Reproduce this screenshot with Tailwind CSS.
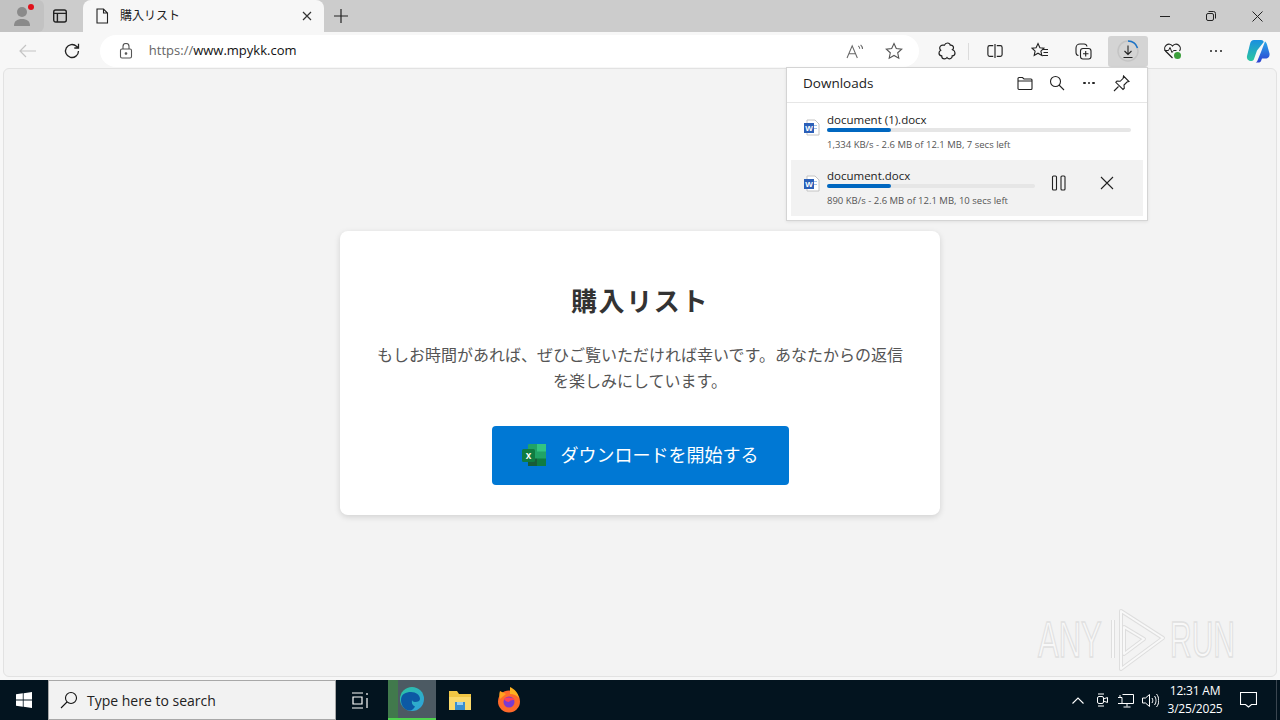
<!DOCTYPE html>
<html lang="ja">
<head>
  <meta charset="UTF-8" />
  <title>購入リスト</title>
  <script src="https://cdn.jsdelivr.net/npm/@tailwindcss/browser@4"></script>
</head>
<body class="relative w-[1280px] h-[720px] overflow-hidden bg-[#f7f7f7] font-['Open_Sans','Noto_Sans_CJK_JP',sans-serif] text-[#222]">

  <!-- title bar -->
  <div class="h-[32px] bg-[#cccccc] flex items-end">
    <div class="w-[44px] h-[32px] bg-[#c2c2c2] rounded-r-[6px] relative flex items-center justify-center">
      <svg width="18" height="20" viewBox="0 0 18 20" fill="#8a8a8a"><circle cx="9" cy="6" r="5"/><path d="M1 20c0-5 3-7 8-7s8 2 8 7z"/></svg>
      <span class="absolute left-[28px] top-[4px] w-[6px] h-[6px] rounded-full bg-[#e0101a]"></span>
    </div>
    <div class="w-[32px] h-[32px] mr-[7px] flex items-center justify-center">
      <svg width="16" height="16" viewBox="0 0 16 16" fill="none" stroke="#222" stroke-width="1.4"><rect x="1.700" y="2" width="12.600" height="12" rx="2"/><path d="M1.700 5.400h12.600M5.400 5.400V14"/></svg>
    </div>
    <div class="w-[241px] h-[32px] bg-[#f7f7f7] rounded-t-[8px] flex items-center pl-[12px] pr-[12px]">
      <svg width="14" height="16" viewBox="0 0 14 16" fill="none" stroke="#222" stroke-width="1.100"><path d="M2 1h6.500L12.500 5v10H2zM8.500 1v4h4"/></svg>
      <span class="ml-[11px] text-[12px] flex-1 text-[#222]">購入リスト</span>
      <svg width="10" height="10" viewBox="0 0 10 10" stroke="#333" stroke-width="1.200"><path d="M1 1l8 8M9 1L1 9"/></svg>
    </div>
    <div class="w-[34px] h-[32px] flex items-center justify-center">
      <svg width="14" height="14" viewBox="0 0 14 14" stroke="#222" stroke-width="1.200"><path d="M7 0v14M0 7h14"/></svg>
    </div>
    <div class="ml-auto flex h-[32px] items-center">
      <div class="w-[46px] flex justify-center"><svg width="10" height="10" viewBox="0 0 10 10" stroke="#222"><path d="M0 5.500h10"/></svg></div>
      <div class="w-[46px] flex justify-center"><svg width="10" height="10" viewBox="0 0 10 10" fill="none" stroke="#222"><rect x="0.500" y="2.500" width="7" height="7" rx="1.500"/><path d="M2.500 0.500h5a2 2 0 0 1 2 2v5"/></svg></div>
      <div class="w-[46px] flex justify-center"><svg width="11" height="11" viewBox="0 0 11 11" stroke="#222"><path d="M0.500 0.500l10 10M10.500 0.500l-10 10"/></svg></div>
    </div>
  </div>

  <!-- toolbar -->
  <div class="h-[36px] pt-[2px] bg-[#f7f7f7] flex items-center pl-[8px]">
    <div class="w-[40px] flex justify-center">
      <svg width="18" height="14" viewBox="0 0 18 14" fill="none" stroke="#c4c4c4" stroke-width="1.200"><path d="M17 7H1M7 1L1 7l6 6"/></svg>
    </div>
    <div class="w-[48px] flex justify-center">
      <svg width="18" height="18" viewBox="0 0 18 18" fill="none" stroke="#222" stroke-width="1.300"><path d="M15.500 9a6.500 6.500 0 1 1-2-4.700L15.500 6M15.500 1.800V6h-4.200"/></svg>
    </div>
    <div class="ml-[4px] w-[820px] h-[32px] rounded-full bg-white flex items-center pl-[19px] pr-[16px]">
      <svg width="14" height="16" viewBox="0 0 14 16" fill="none" stroke="#555" stroke-width="1.100"><rect x="1.500" y="6" width="11" height="9" rx="1.500"/><path d="M4 6V3.500a3 3 0 0 1 6 0V6"/><circle cx="7" cy="10.500" r="0.800" fill="#555"/></svg>
      <span class="ml-[16px] text-[13px] text-[#666]">https://<span class="text-[#111]">www.mpykk.com</span></span>
      <div class="ml-auto flex items-center gap-[21px]">
        <svg width="18" height="15" viewBox="0 0 19 16" fill="none" stroke="#666" stroke-width="1.100"><path d="M1 15L6.500 2 12 15M3 10.500h7M13 2c1 .8 1.500 2 1.500 3M15.500 1c1.300 1.200 2 2.600 2 4.200"/></svg>
        <svg width="18" height="18" viewBox="0 0 18 18" fill="none" stroke="#555" stroke-width="1.100"><path d="M9 1.500l2.300 5 5.400.6-4 3.700 1.100 5.400L9 13.500l-4.800 2.700 1.100-5.400-4-3.700 5.400-.6z"/></svg>
      </div>
    </div>
    <div class="ml-[6px] w-[44px] flex justify-center">
      <svg width="18" height="18" viewBox="0 0 18 18" fill="none" stroke="#222" stroke-width="1.200"><path d="M6.500 3.200C7 1.500 8.300 1 9.500 1c1.400 0 2.500.8 2.800 2.200 1.800-.3 3.200.8 3.200 2.500 0 .9-.3 1.500-1 2 1.500.6 2.500 1.700 2.500 3.200 0 1.700-1.200 2.800-2.800 2.900.1 1.700-1 3-2.700 3-1.100 0-1.900-.4-2.500-1.300-.6.900-1.500 1.300-2.500 1.300-1.700 0-2.800-1.200-2.800-2.900C2 13.700 1 12.500 1 11c0-1.200.7-2.200 1.700-2.800C2 7.600 1.700 6.900 1.700 6c0-1.800 1.500-3 3.300-2.900z"/></svg>
    </div>
    <div class="w-[1px] h-[17px] bg-[#dcdcdc]"></div>
    <div class="ml-[7px] w-[38px] flex justify-center">
      <svg width="16" height="16" viewBox="0 0 18 16" fill="none" stroke="#222" stroke-width="1.300"><path d="M9 0v16M7 2H3a2 2 0 0 0-2 2v8a2 2 0 0 0 2 2h4M11 2h4a2 2 0 0 1 2 2v8a2 2 0 0 1-2 2h-4"/></svg>
    </div>
    <div class="ml-[7px] w-[38px] flex justify-center">
      <svg width="18" height="18" viewBox="0 0 18 18" fill="none" stroke="#222" stroke-width="1.100"><path d="M7 1.500l1.900 4.300 4 .4-3 2.900.9 4.400L7 11.200l-3.800 2.300.9-4.400-3-2.900 4-.4zM12 7.500h5M12.500 10.500h4.500M11.500 13.500h5.500"/></svg>
    </div>
    <div class="ml-[5px] w-[38px] flex justify-center">
      <svg width="18" height="18" viewBox="0 0 18 18" fill="none" stroke="#222" stroke-width="1.100"><rect x="6.500" y="6.500" width="10.500" height="10.500" rx="2.500"/><path d="M11.700 9v5.500M9 11.700h5.500M4.500 13.500A3 3 0 0 1 2 10.500V6a4 4 0 0 1 4-4h4a3 3 0 0 1 3 2.500M2.500 4.500"/></svg>
    </div>
    <div class="ml-[6px] w-[40px] h-[31px] bg-[#d4d4d4] rounded-[3px] flex items-center justify-center">
      <svg width="24" height="24" viewBox="0 0 24 24" fill="none"><circle cx="12" cy="12" r="10" stroke="#c4c4c4" stroke-width="1.500"/><path d="M12 2a10 10 0 0 1 9.500 7" stroke="#1a73c8" stroke-width="1.500"/><path d="M12 6.500v9M8.500 12l3.500 3.500 3.500-3.500M7.500 18.500h9" stroke="#222" stroke-width="1.100"/></svg>
    </div>
    <div class="ml-[4px] w-[40px] flex justify-center">
      <svg width="19" height="18" viewBox="0 0 19 18" fill="none"><path d="M9.500 16L2.500 9a4.300 4.300 0 0 1 7-5 4.300 4.300 0 0 1 7 5" stroke="#222" stroke-width="1.200"/><path d="M1.500 8.500h4l1.500-3 2 5 1.500-2h3" stroke="#222" stroke-width="1"/><circle cx="14.500" cy="13.500" r="3.500" fill="#3c9f3c"/></svg>
    </div>
    <div class="ml-[4px] w-[40px] flex justify-center gap-[2.500px]">
      <span class="w-[2.500px] h-[2.500px] rounded-full bg-[#222]"></span><span class="w-[2.500px] h-[2.500px] rounded-full bg-[#222]"></span><span class="w-[2.500px] h-[2.500px] rounded-full bg-[#222]"></span>
    </div>
    <div class="w-[44px] flex justify-center">
      <svg width="24" height="24" viewBox="0 0 24 24"><defs><linearGradient id="cpa" x1="0.300" y1="0" x2="0.300" y2="1"><stop offset="0" stop-color="#1a8fe0"/><stop offset="1" stop-color="#2cc7a0"/></linearGradient><linearGradient id="cpb" x1="0.500" y1="0" x2="0.500" y2="1"><stop offset="0" stop-color="#29a8ea"/><stop offset="1" stop-color="#2c3fd0"/></linearGradient></defs><path d="M8 1h7c1.500 0 2.500.8 2.800 2L11 11.500 8 20c-.5 1.500-1.500 2-3 2-3 0-4.500-2.500-4-5L4 5c.5-2.500 2-4 4-4z" fill="url(#cpa)"/><path d="M19 2.500c1 .5 1.500 1.500 2 3l2.500 9c.5 3-1.500 5-4 5H16l-1 2.500c-.5 1-1.500 1.500-3 1.500H9c1 0 2-.5 2.500-2L15 13z" fill="url(#cpb)"/></svg>
    </div>
  </div>

  <!-- page -->
  <div class="h-[612px] px-[3px] pb-[3px] bg-[#f7f7f7]">
    <div class="h-full rounded-[6px] border border-[#e2e2e2] bg-[#f3f3f3] flex items-center justify-center">
      <div class="w-[600px] h-[284px] bg-white rounded-[8px] shadow-[0_2px_6px_rgba(0,0,0,0.14)] pt-[50px] px-[30px] flex flex-col items-center">
        <h1 class="text-[26px] leading-[40px] font-bold tracking-[1.600px] text-[#333]">購入リスト</h1>
        <p class="mt-[21px] text-[16px] leading-[26px] text-center text-[#555]">もしお時間があれば、ぜひご覧いただければ幸いです。あなたからの返信を楽しみにしています。</p>
        <div class="mt-[32px] w-[297px] h-[59px] bg-[#0078d4] rounded-[4px] flex items-center justify-center gap-[15px]">
          <svg width="24" height="24" viewBox="0 0 24 24">
            <rect x="6" y="1" width="18" height="22" rx="1" fill="#21a366"/>
            <rect x="15" y="1" width="9" height="7.500" fill="#33c481"/>
            <rect x="15" y="15.500" width="9" height="7.500" fill="#107c41"/>
            <rect x="6" y="15.500" width="9" height="7.500" fill="#185c37"/>
            <rect x="0" y="6" width="13" height="13" rx="1.500" fill="#107c41"/>
            <text x="6.500" y="16" text-anchor="middle" font-size="10" font-weight="700" fill="#fff" font-family="Liberation Sans">x</text>
          </svg>
          <span class="text-[18px] text-white">ダウンロードを開始する</span>
        </div>
      </div>
    </div>
  </div>

  <!-- taskbar -->
  <div class="h-[40px] bg-[#03141f] flex items-center text-white">
    <div class="w-[48px] flex justify-center">
      <svg width="16" height="16" viewBox="0 0 16 16" fill="#fff"><path d="M0 2.300l6.800-1v6.300H0zM7.600 1.200L16 0v7.600H7.600zM0 8.400h6.800v6.300l-6.800-1zM7.600 8.400H16V16l-8.400-1.200z"/></svg>
    </div>
    <div class="w-[288px] h-[40px] bg-[#f2f2f2] border border-[#a8a8a8] flex items-center pl-[11px]">
      <svg width="18" height="18" viewBox="0 0 18 18" fill="none" stroke="#111" stroke-width="1.100"><circle cx="11" cy="7" r="5.500"/><path d="M7 11l-6 6"/></svg>
      <span class="ml-[9px] text-[14px] text-[#222]">Type here to search</span>
    </div>
    <div class="w-[52px] pr-[4px] flex justify-center">
      <svg width="17" height="17" viewBox="0 0 17 17" fill="none" stroke="#fff" stroke-width="1.200"><path d="M0 1h11M0 16h11M1 5h9v7H1zM15 1v2M15 6v10"/></svg>
    </div>
    <div class="w-[48px] h-[40px] bg-[#4c5a63] border-b-[2px] border-[#4fd34f] relative flex items-center justify-center">
      <span class="absolute left-0 top-0 w-[10px] h-[38px] bg-[#41794c]"></span>
      <svg class="relative" width="26" height="26" viewBox="0 0 26 26"><defs><linearGradient id="ed" x1="0" y1="0" x2="1" y2="1"><stop offset="0" stop-color="#2bc4a0"/><stop offset="1" stop-color="#2f9fe0"/></linearGradient></defs><circle cx="13" cy="13" r="12" fill="url(#ed)"/><path d="M2 14C2 8 7 6 12 6c5 0 9 3 9 7 0 2-2 3-5 3-2 0-3-1-3-2.500 0 2-1 5 3 7-1 2-3 4-5 4C6 24.500 2 20 2 14z" fill="#0c59a4"/></svg>
    </div>
    <div class="w-[48px] flex justify-center">
      <svg width="24" height="22" viewBox="0 0 24 22"><path d="M1 2h8l2 3h12v16H1z" fill="#f1c644"/><rect x="1" y="8" width="22" height="13" fill="#fbd96b"/><rect x="7" y="13" width="10" height="8" fill="#3a8fd0"/><rect x="9" y="13" width="6" height="3" fill="#9bd0f0"/></svg>
    </div>
    <div class="ml-[1px] w-[48px] flex justify-center">
      <svg width="24" height="26" viewBox="0 0 24 26"><circle cx="12" cy="14.500" r="11" fill="#ff6a2a"/><path d="M13 0c4 2 8 5 9 11-3-3-5-4-9-4z" fill="#ffb11f"/><path d="M3 4c-1 3-1 5 0 8l6-5z" fill="#ffa21f"/><circle cx="12" cy="15" r="5.500" fill="#7a3bd1"/><path d="M7 12c3-2 8-2 11 1-2 0-5 0-6 2-2 0-4-1-5-3z" fill="#ff3f5b"/></svg>
    </div>

    <div class="ml-auto flex items-center pr-[3px]">
      <svg width="12" height="7" viewBox="0 0 12 7" fill="none" stroke="#fff" stroke-width="1.100"><path d="M0.500 6.500L6 1l5.500 5.500"/></svg>
      <svg class="ml-[12px]" width="13" height="16" viewBox="0 0 13 16" fill="none" stroke="#fff"><rect x="1.500" y="4.500" width="6" height="7" rx="1.500"/><path d="M7.500 7l4-1.500v5l-4-1.500M2 2h6M2 14h6"/></svg>
      <svg class="ml-[8px]" width="17" height="15" viewBox="0 0 17 15" fill="none" stroke="#fff"><path d="M5.500 1.500h11v9H5M1 4.500h4v6H1M10 10.500v3M6.500 14h7M3 4.500V2"/></svg>
      <svg class="ml-[8px]" width="17" height="15" viewBox="0 0 17 15" fill="none" stroke="#fff"><path d="M0.500 5h3L7.500 1.500v12L3.500 10h-3zM10 5c1 1.500 1 3.500 0 5M12.500 3c2 2.500 2 6.500 0 9M14.500 1c3 3.500 3 9.500 0 13"/></svg>
      <div class="ml-[7px] w-[58px] text-center text-[12px] leading-[18px] text-white tracking-[-0.200px]">
        <div>12:31 AM</div>
        <div>3/25/2025</div>
      </div>
      <div class="w-[48px] flex justify-center">
        <svg width="17" height="16" viewBox="0 0 17 16" fill="none" stroke="#fff" stroke-width="1.100"><path d="M0.500 0.500h16v12h-5L8.500 15l-3-2.500h-5z"/></svg>
      </div>
      <div class="ml-[4px] w-[1px] h-[40px] bg-[#3a4650]"></div>
    </div>
  </div>

  <!-- downloads flyout -->
  <div class="absolute left-[786px] top-[67px] w-[362px] h-[154px] bg-white border border-[#d4d4d4] shadow-[0_1px_3px_rgba(0,0,0,0.08)] flex flex-col">
    <div class="h-[36px] pb-[4px] border-b border-[#e6e6e6] flex items-center pl-[16px] pr-[17px]">
      <span class="text-[13.500px] font-medium text-[#222]">Downloads</span>
      <div class="ml-auto flex items-center gap-[16px]">
        <svg width="16" height="16" viewBox="0 0 16 16" fill="none" stroke="#222" stroke-width="1.100"><path d="M1 3.500a1 1 0 0 1 1-1h3.500l1.500 1.500h7a1 1 0 0 1 1 1v8.500a1 1 0 0 1-1 1H2a1 1 0 0 1-1-1zM1 6h14"/></svg>
        <svg width="16" height="16" viewBox="0 0 16 16" fill="none" stroke="#222" stroke-width="1.100"><circle cx="6.500" cy="6.500" r="5"/><path d="M10 10l5 5"/></svg>
        <div class="w-[16px] flex justify-center gap-[2px]">
          <span class="w-[2.500px] h-[2.500px] rounded-full bg-[#222]"></span><span class="w-[2.500px] h-[2.500px] rounded-full bg-[#222]"></span><span class="w-[2.500px] h-[2.500px] rounded-full bg-[#222]"></span>
        </div>
        <svg width="17" height="17" viewBox="0 0 17 17" fill="none" stroke="#222" stroke-width="1.100"><path d="M10.500 1l5.500 5.500-2 .500-3 3 .3 3.200-1.300 1.300-7.200-7.200L4 6l3.200.3 3-3zM5.500 11.500L1 16"/></svg>
      </div>
    </div>
    <div class="pt-[1px] pb-[4px] px-[4px] flex flex-col">
      <div class="h-[56px] flex items-start pl-[12px] pr-[12px]">
        <svg class="mt-[15px]" width="17" height="17" viewBox="0 0 17 17"><path d="M4 1h8l4 4v11H4z" fill="#fff" stroke="#c4c4c4"/><rect x="9" y="6" width="5" height="1" fill="#9ec3ea"/><rect x="9" y="9" width="5" height="1" fill="#9ec3ea"/><rect x="1" y="4" width="10" height="10" fill="#2b5fb8"/><text x="6" y="12" text-anchor="middle" font-size="8" font-weight="700" fill="#fff" font-family="Liberation Sans">W</text></svg>
        <div class="ml-[7px] flex-1 pt-[8px]">
          <div class="text-[11.500px] leading-[16px] text-[#222]">document (1).docx</div>
          <div class="h-[4px] rounded-full bg-[#e6e6e6]"><div class="w-[64px] h-[4px] rounded-full bg-[#0067c0]"></div></div>
          <div class="mt-[6px] text-[9.500px] leading-[14px] text-[#555]">1,334 KB/s - 2.6 MB of 12.1 MB, 7 secs left</div>
        </div>
      </div>
      <div class="h-[56px] bg-[#f2f2f2] flex items-start pl-[12px]">
        <svg class="mt-[15px]" width="17" height="17" viewBox="0 0 17 17"><path d="M4 1h8l4 4v11H4z" fill="#fff" stroke="#c4c4c4"/><rect x="9" y="6" width="5" height="1" fill="#9ec3ea"/><rect x="9" y="9" width="5" height="1" fill="#9ec3ea"/><rect x="1" y="4" width="10" height="10" fill="#2b5fb8"/><text x="6" y="12" text-anchor="middle" font-size="8" font-weight="700" fill="#fff" font-family="Liberation Sans">W</text></svg>
        <div class="ml-[7px] w-[208px] pt-[8px]">
          <div class="text-[11.500px] leading-[16px] text-[#222]">document.docx</div>
          <div class="h-[4px] rounded-full bg-[#e6e6e6]"><div class="w-[64px] h-[4px] rounded-full bg-[#0067c0]"></div></div>
          <div class="mt-[6px] text-[9.500px] leading-[14px] text-[#555]">890 KB/s - 2.6 MB of 12.1 MB, 10 secs left</div>
        </div>
        <svg class="ml-[16px] mt-[15px]" width="16" height="16" viewBox="0 0 16 16" fill="none" stroke="#222" stroke-width="1.100"><rect x="1.500" y="1" width="4" height="14" rx="1"/><rect x="10" y="1" width="4" height="14" rx="1"/></svg>
        <svg class="ml-[33px] mt-[16px]" width="14" height="14" viewBox="0 0 14 14" stroke="#222" stroke-width="1.100"><path d="M1 1l12 12M13 1L1 13"/></svg>
      </div>
    </div>
  </div>

  <!-- watermark -->
  <div class="absolute left-[1038px] top-[608px] flex items-center pointer-events-none">
    <span class="text-[50px] leading-[64px] font-['Liberation_Sans'] text-[#f8f8f8] [-webkit-text-stroke:1.500px_#e0e0e0] scale-x-[0.62] origin-left w-[68px]">ANY</span>
    <svg width="64" height="64" viewBox="0 0 64 64" fill="none" stroke-linejoin="round"><path d="M7 12v38M15 3l42 27-42 31V3zM18 19l20 12-20 15z" stroke="#dedede" stroke-width="4"/><path d="M7 12v38M15 3l42 27-42 31V3zM18 19l20 12-20 15z" stroke="#f8f8f8" stroke-width="2"/></svg>
    <span class="text-[50px] leading-[64px] font-['Liberation_Sans'] text-[#f8f8f8] [-webkit-text-stroke:1.500px_#e0e0e0] scale-x-[0.6] origin-left w-[62px]">RUN</span>
  </div>
</body>
</html>
